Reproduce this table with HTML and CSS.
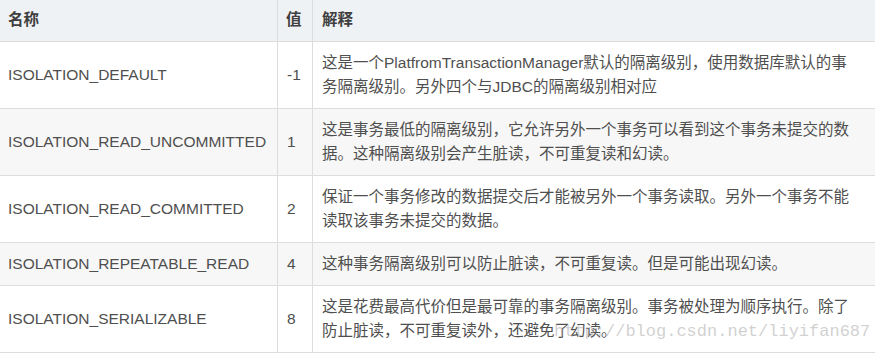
FILE: index.html
```html
<!DOCTYPE html>
<html lang="zh-CN">
<head>
<meta charset="utf-8">
<title>隔离级别</title>
<link rel="stylesheet" href="styles.css">
</head>
<body>
<div class="wrap">
<table class="iso">
  <thead>
    <tr>
      <th class="c1">名称</th>
      <th class="c2">值</th>
      <th class="c3">解释</th>
    </tr>
  </thead>
  <tbody>
    <tr>
      <td class="c1">ISOLATION_DEFAULT</td>
      <td class="c2">-1</td>
      <td class="c3">这是一个PlatfromTransactionManager默认的隔离级别，使用数据库默认的事务隔离级别。另外四个与JDBC的隔离级别相对应</td>
    </tr>
    <tr class="alt">
      <td class="c1">ISOLATION_READ_UNCOMMITTED</td>
      <td class="c2">1</td>
      <td class="c3">这是事务最低的隔离级别，它允许另外一个事务可以看到这个事务未提交的数据。这种隔离级别会产生脏读，不可重复读和幻读。</td>
    </tr>
    <tr>
      <td class="c1">ISOLATION_READ_COMMITTED</td>
      <td class="c2">2</td>
      <td class="c3">保证一个事务修改的数据提交后才能被另外一个事务读取。另外一个事务不能读取该事务未提交的数据。</td>
    </tr>
    <tr class="alt">
      <td class="c1">ISOLATION_REPEATABLE_READ</td>
      <td class="c2">4</td>
      <td class="c3">这种事务隔离级别可以防止脏读，不可重复读。但是可能出现幻读。</td>
    </tr>
    <tr>
      <td class="c1">ISOLATION_SERIALIZABLE</td>
      <td class="c2">8</td>
      <td class="c3">这是花费最高代价但是最可靠的事务隔离级别。事务被处理为顺序执行。除了防止脏读，不可重复读外，还避免了幻读。</td>
    </tr>
  </tbody>
</table>
<div class="watermark">http://blog.csdn.net/liyifan687</div>
</div>
</body>
</html>
```
FILE: styles.css
```css
html, body {
  margin: 0;
  padding: 0;
  background: #ffffff;
}

.wrap {
  position: relative;
  width: 875px;
  height: 353px;
  overflow: hidden;
}

.iso {
  display: grid;
  grid-template-columns: 277px 35px 1fr;
  width: 875px;
  border-collapse: separate;
  border-spacing: 0;
  font-family: "Liberation Sans", "Noto Sans CJK SC", Arial, sans-serif;
  font-size: 15.5px;
  line-height: 24px;
  color: #4f4f4f;
}

.iso thead,
.iso tbody,
.iso tr {
  display: contents;
}

.iso th,
.iso td {
  display: flex;
  align-items: center;
  padding: 9px 8px;
  border-bottom: 1px solid #dddddd;
  text-align: left;
  box-sizing: border-box;
}

.iso th {
  background: #eff2f5;
  font-weight: bold;
  color: #3f3f3f;
  padding-top: 8px;
}

.iso .c2,
.iso .c3 {
  border-left: 1px solid #dddddd;
}

.iso td.c2 {
  padding-left: 9px;
}

.iso .c3 {
  padding-left: 9px;
  padding-right: 18px;
}

.iso tr.alt td {
  background: #f7f7f7;
}

.watermark {
  position: absolute;
  left: 554px;
  top: 322px;
  font-family: "Liberation Mono", "DejaVu Sans Mono", monospace;
  font-size: 17px;
  line-height: 20px;
  color: rgba(170, 170, 170, 0.55);
  white-space: nowrap;
  pointer-events: none;
}
```
